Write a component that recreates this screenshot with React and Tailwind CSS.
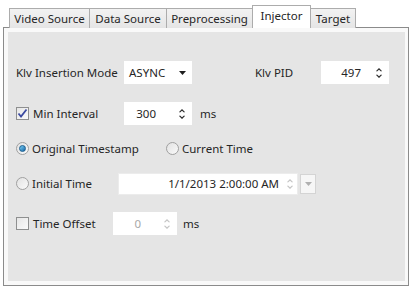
import React from 'react';

const font = { fontFamily: '"Noto Sans", "Open Sans", sans-serif' };

const tabs = [
  { label: 'Video Source', w: 'w-[81px]' },
  { label: 'Data Source', w: 'w-[78px]' },
  { label: 'Preprocessing', w: 'w-[87px]' },
  { label: 'Injector', w: 'w-[59px]', active: true },
  { label: 'Target', w: 'w-[46px]' },
];

const SpinArrows = ({ disabled }) => (
  <svg width="8" height="14" viewBox="0 0 8 14" className="shrink-0">
    <path d="M1 5 L4 2 L7 5 L6 5.5 L4 3.8 L2 5.5 Z" fill={disabled ? '#c4c4c4' : '#2a2a2a'} />
    <path d="M1 9 L4 12 L7 9 L6 8.5 L4 10.2 L2 8.5 Z" fill={disabled ? '#c4c4c4' : '#2a2a2a'} />
  </svg>
);

const DownArrow = ({ color = '#1e1e1e' }) => (
  <svg width="7" height="4" viewBox="0 0 7 4" className="shrink-0">
    <path d="M0 0 H7 L3.5 4 Z" fill={color} />
  </svg>
);

const Spinner = ({ value, width, disabled, textPad }) => (
  <div className={`flex items-center h-[23px] bg-white ${width}`}>
    <span className={`flex-1 text-right ${textPad} ${disabled ? 'text-[#a8a8a8]' : 'text-[#262626]'}`}>{value}</span>
    <div className="pr-[6px] flex items-center">
      <SpinArrows disabled={disabled} />
    </div>
  </div>
);

const CheckBox = ({ checked }) => (
  <div className="w-[13px] h-[13px] border border-[#8e8f8f] bg-gradient-to-br from-[#e6e6e6] to-[#fafafa] flex items-center justify-center shrink-0">
    {checked && (
      <svg width="11" height="11" viewBox="0 0 11 11">
        <path d="M1.5 5.5 L4 8.5 L9.5 1.5" stroke="#3b4aa0" strokeWidth="1.8" fill="none" />
      </svg>
    )}
  </div>
);

const Radio = ({ checked }) => (
  <div className="w-[13px] h-[13px] rounded-full border border-[#a0a0a0] bg-gradient-to-br from-[#e2e2e2] to-[#fafafa] flex items-center justify-center shrink-0">
    {checked && (
      <div className="w-[7px] h-[7px] rounded-full bg-gradient-to-br from-[#7ad0f5] to-[#1468a8] border border-[#1b5e8f]" />
    )}
  </div>
);

export default function App() {
  return (
    <div className="w-[413px] h-[291px] bg-white text-[11.5px] text-[#262626] pt-[5px]" style={font}>
      {/* tab strip */}
      <div className="flex items-end h-[23px] pl-[9px] relative z-10">
        {tabs.map((t) =>
          t.active ? (
            <div
              key={t.label}
              className={`${t.w} h-[23px] -ml-[1px] border border-b-0 border-[#acacac] bg-white flex items-center justify-center leading-none pb-[3px]`}
            >
              {t.label}
            </div>
          ) : (
            <div
              key={t.label}
              className={`${t.w} h-[20px] -ml-[1px] first:ml-0 border border-b-0 border-[#acacac] bg-gradient-to-b from-[#f2f2f2] to-[#e5e5e5] flex items-center justify-center leading-none`}
            >
              {t.label}
            </div>
          )
        )}
      </div>

      {/* panel */}
      <div className="ml-[3px] w-[406px] h-[259px] -mt-[1px] border border-[#8b8b8b] bg-[#f9f9f9] pt-[4px] pl-[4px] pr-[3px] pb-[4px]">
        <div className="h-full bg-[#e5e5e5] flex flex-col pt-[29px] pl-[8px]">
          {/* row 1 */}
          <div className="flex items-center h-[23px]">
            <span className="w-[108px]">Klv Insertion Mode</span>
            <div className="w-[68px] h-[23px] bg-white flex items-center justify-between pl-[5px] pr-[6px]">
              <span>ASYNC</span>
              <DownArrow />
            </div>
            <span className="ml-[63px] w-[66px]">Klv PID</span>
            <Spinner value="497" width="w-[68px]" textPad="pr-[14px]" />
          </div>

          {/* row 2 */}
          <div className="flex items-center h-[23px] mt-[18px]">
            <div className="w-[108px] flex items-center gap-[4px]">
              <CheckBox checked />
              <span>Min Interval</span>
            </div>
            <Spinner value="300" width="w-[68px]" textPad="pr-[22px]" />
            <span className="ml-[8px]">ms</span>
          </div>

          {/* row 3 */}
          <div className="flex items-center h-[23px] mt-[12px]">
            <div className="w-[150px] flex items-center gap-[3px]">
              <Radio checked />
              <span>Original Timestamp</span>
            </div>
            <div className="flex items-center gap-[3px]">
              <Radio />
              <span>Current Time</span>
            </div>
          </div>

          {/* row 4 */}
          <div className="flex items-center h-[23px] mt-[12px]">
            <div className="w-[102px] flex items-center gap-[3px]">
              <Radio />
              <span>Initial Time</span>
            </div>
            <div className="w-[180px] h-[22px] bg-white border border-[#ececec] flex items-center justify-end pr-[3px] gap-[7px]">
              <span>1/1/2013 2:00:00 AM</span>
              <SpinArrows disabled />
            </div>
            <div className="ml-[2px] w-[16px] h-[20px] border border-[#d4d4d4] bg-[#f6f6f6] flex items-center justify-center">
              <DownArrow color="#b0b0b0" />
            </div>
          </div>

          {/* row 5 */}
          <div className="flex items-center h-[23px] mt-[17px]">
            <div className="w-[97px] flex items-center gap-[4px]">
              <CheckBox />
              <span>Time Offset</span>
            </div>
            <Spinner value="0" width="w-[64px]" textPad="pr-[22px]" disabled />
            <span className="ml-[6px]">ms</span>
          </div>
        </div>
      </div>
    </div>
  );
}
